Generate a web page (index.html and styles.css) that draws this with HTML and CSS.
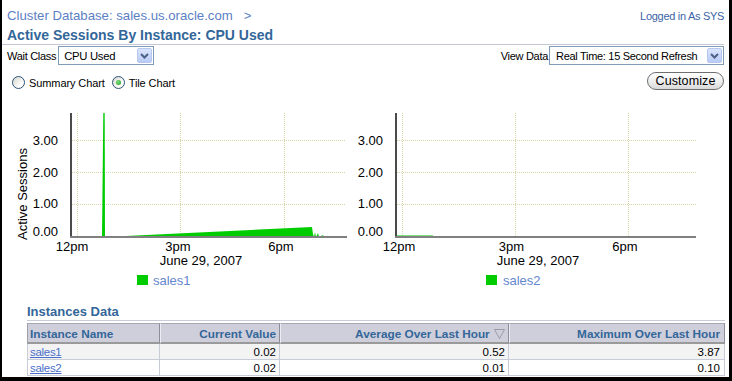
FILE: index.html
```html
<!DOCTYPE html>
<html>
<head>
<meta charset="utf-8">
<title>Active Sessions By Instance: CPU Used</title>
<link rel="stylesheet" href="styles.css">
</head>
<body>
<div class="frame">
  <div class="head">
    <div class="crumbs"><a class="crumb" href="#">Cluster Database: sales.us.oracle.com</a><span class="sep">&gt;</span></div>
    <div class="login">Logged in As SYS</div>
  </div>
  <h1 class="title">Active Sessions By Instance: CPU Used</h1>
  <div class="rule"></div>
  <div class="controls">
    <div class="field">
      <span class="lbl">Wait Class</span>
      <div class="select sel-wait"><span class="val">CPU Used</span><span class="drop"><svg width="13" height="15" viewBox="0 0 13 15"><path d="M3 6 L6.5 9.5 L10 6" fill="none" stroke="#4d6185" stroke-width="2"/></svg></span></div>
    </div>
    <div class="field">
      <span class="lbl lbl-view">View Data</span>
      <div class="select sel-view"><span class="val">Real Time: 15 Second Refresh</span><span class="drop"><svg width="13" height="15" viewBox="0 0 13 15"><path d="M3 6 L6.5 9.5 L10 6" fill="none" stroke="#4d6185" stroke-width="2"/></svg></span></div>
    </div>
  </div>
  <div class="options">
    <div class="radios">
      <span class="radio"></span><span class="rlabel">Summary Chart</span>
      <span class="radio checked"></span><span class="rlabel">Tile Chart</span>
    </div>
    <button class="customize">Customize</button>
  </div>
  <div class="charts">
    <svg class="chart" width="348" height="190" viewBox="0 0 348 190">
      <g class="grid">
        <line x1="70" y1="39.5" x2="344" y2="39.5"/>
        <line x1="70" y1="71.5" x2="344" y2="71.5"/>
        <line x1="70" y1="103.5" x2="344" y2="103.5"/>
        <line x1="75.5" y1="12" x2="75.5" y2="135"/>
        <line x1="178.5" y1="12" x2="178.5" y2="135"/>
        <line x1="282.5" y1="12" x2="282.5" y2="135"/>
      </g>
      <polygon class="data" points="100,136 101.3,12 102.7,12 103,136"/>
      <polygon class="data" points="103,136 310,126 311,133 312,136 313,131 314,136 316,132 317,136 321,134 322,136"/>
      <rect class="yaxis" x="68" y="12" width="2" height="125"/>
      <rect class="xaxis" x="68" y="135" width="277" height="2"/>
      <g class="ylab">
        <text x="56" y="44">3.00</text>
        <text x="56" y="76">2.00</text>
        <text x="56" y="107">1.00</text>
        <text x="56" y="135">0.00</text>
      </g>
      <text class="ytitle" transform="translate(25,93) rotate(-90)">Active Sessions</text>
      <g class="xlab">
        <text x="70" y="150">12pm</text>
        <text x="176" y="150">3pm</text>
        <text x="279" y="150">6pm</text>
        <text x="199" y="164">June 29, 2007</text>
      </g>
      <rect class="swatch" x="135" y="174" width="11" height="10"/>
      <text class="legend" x="151" y="184">sales1</text>
    </svg>
    <svg class="chart" width="377" height="190" viewBox="0 0 377 190">
      <g class="grid">
        <line x1="47" y1="39.5" x2="346" y2="39.5"/>
        <line x1="47" y1="71.5" x2="346" y2="71.5"/>
        <line x1="47" y1="103.5" x2="346" y2="103.5"/>
        <line x1="52.5" y1="12" x2="52.5" y2="135"/>
        <line x1="165.5" y1="12" x2="165.5" y2="135"/>
        <line x1="278.5" y1="12" x2="278.5" y2="135"/>
      </g>
      <line class="trace" x1="47" y1="134.5" x2="83" y2="134.5"/>
      <rect class="yaxis" x="45" y="12" width="2" height="125"/>
      <rect class="xaxis" x="45" y="135" width="301" height="2"/>
      <g class="ylab">
        <text x="33" y="44">3.00</text>
        <text x="33" y="76">2.00</text>
        <text x="33" y="107">1.00</text>
        <text x="33" y="135">0.00</text>
      </g>
      <g class="xlab">
        <text x="49" y="150">12pm</text>
        <text x="161.5" y="150">3pm</text>
        <text x="275" y="150">6pm</text>
        <text x="188" y="164">June 29, 2007</text>
      </g>
      <rect class="swatch" x="136" y="174" width="11" height="10"/>
      <text class="legend" x="153" y="184">sales2</text>
    </svg>
  </div>
  <section class="instances">
    <h2 class="sub">Instances Data</h2>
    <table class="data-table">
      <colgroup>
        <col class="c1"><col class="c2"><col class="c3"><col class="c4">
      </colgroup>
      <thead>
        <tr>
          <th class="left">Instance Name</th>
          <th>Current Value</th>
          <th>Average Over Last Hour <svg class="sort" width="11" height="10" viewBox="0 0 11 10"><path d="M0.5 0.5 L10.5 0.5 L5.5 9.5 Z" fill="none" stroke="#9a9aa8"/></svg></th>
          <th>Maximum Over Last Hour</th>
        </tr>
      </thead>
      <tbody>
        <tr class="odd"><td class="left"><a href="#">sales1</a></td><td>0.02</td><td>0.52</td><td>3.87</td></tr>
        <tr><td class="left"><a href="#">sales2</a></td><td>0.02</td><td>0.01</td><td>0.10</td></tr>
      </tbody>
    </table>
  </section>
</div>
</body>
</html>
```

FILE: styles.css
```css
* { box-sizing: border-box; }
html, body { margin: 0; padding: 0; }
body {
  width: 732px;
  height: 381px;
  overflow: hidden;
  background: #000;
  font-family: "Liberation Sans", Arial, sans-serif;
  color: #000;
}
.frame {
  margin-left: 2px;
  width: 727px;
  height: 377px;
  background: #fff;
  overflow: hidden;
}
.head {
  display: flex;
  justify-content: space-between;
  align-items: baseline;
  padding: 7px 5px 0 5px;
  line-height: 16px;
}
.crumb {
  font-size: 13.2px;
  color: #5b80c4;
  text-decoration: none;
}
.sep {
  font-size: 13px;
  color: #5b80c4;
  margin-left: 11px;
}
.login {
  font-size: 11px;
  color: #3a64a6;
  letter-spacing: -0.3px;
}
.title {
  margin: 3px 0 0 0;
  padding: 0 5px;
  font-size: 14px;
  line-height: 16px;
  font-weight: bold;
  color: #336699;
}
.rule {
  margin: 1px 5px 0 0;
  height: 1px;
  background: #c4c7cf;
}
.controls {
  display: flex;
  justify-content: space-between;
  align-items: center;
  margin-top: 1px;
  padding: 0 5px;
  height: 19px;
}
.field {
  display: flex;
  align-items: center;
  font-size: 11px;
  letter-spacing: -0.3px;
}
.lbl { margin-right: 2px; }
.lbl-view { margin-right: 1px; }
.select {
  height: 19px;
  border: 1px solid #7f9db9;
  display: flex;
  align-items: center;
  justify-content: space-between;
  padding: 0 1px 0 5px;
  font-size: 11.3px;
  background: #fff;
}
.sel-wait { width: 96px; }
.sel-view { width: 175px; padding-left: 6px; font-size: 11px; }
.drop {
  width: 15px;
  height: 15px;
  display: flex;
  align-items: center;
  justify-content: center;
  background: linear-gradient(#dbe5fd, #b9cbf6);
  border: 1px solid #b6c8f2;
  border-radius: 2px;
}
.options {
  display: flex;
  justify-content: space-between;
  align-items: flex-start;
  margin-top: 6px;
  padding: 0 5px 0 10px;
  height: 19px;
}
.radios {
  display: flex;
  align-items: center;
  height: 13px;
  margin-top: 5px;
  font-size: 11px;
  letter-spacing: -0.1px;
}
.radio {
  position: relative;
  width: 13px;
  height: 13px;
  border-radius: 50%;
  border: 1px solid #2a5277;
  background: linear-gradient(135deg, #d6d6ce, #fdfdfb 70%);
}
.radio.checked::after {
  content: "";
  position: absolute;
  left: 3px;
  top: 3px;
  width: 5px;
  height: 5px;
  border-radius: 50%;
  background: radial-gradient(circle at 40% 40%, #7de07d, #1e9a1e);
}
.rlabel { margin: 0 7px 0 4px; }
.customize {
  margin: 1px 0 0 0;
  width: 77px;
  height: 18px;
  padding: 0;
  border: 1px solid #6f6f6f;
  border-radius: 9px;
  background: linear-gradient(#ffffff, #ececec 60%, #d8d8d8);
  font-family: "Liberation Sans", Arial, sans-serif;
  font-size: 12.5px;
  line-height: 16px;
  color: #000;
  letter-spacing: 0.1px;
}
.charts {
  display: flex;
  margin-top: 11px;
  height: 190px;
}
.chart { display: block; }
.chart text {
  font-family: "Liberation Sans", Arial, sans-serif;
  font-size: 13px;
  fill: #000;
}
.grid line {
  stroke: #d6d6a8;
  stroke-width: 1;
  stroke-dasharray: 1 1;
}
.data { fill: #00cc00; }
.trace { stroke: #00cc00; stroke-width: 1; opacity: 0.5; }
.yaxis { fill: #4a4a4a; }
.xaxis { fill: #808080; }
.ylab text { text-anchor: end; }
.xlab text { text-anchor: middle; }
.chart .ytitle { text-anchor: middle; }
.swatch { fill: #00cc00; }
.chart .legend { fill: #6487cf; }
.instances {
  margin: 13px 4px 0 25px;
}
.sub {
  margin: 0;
  font-size: 13px;
  line-height: 16px;
  font-weight: bold;
  color: #336699;
  border-bottom: 1px solid #c8ccd8;
}
.data-table {
  margin-top: 2px;
  width: 698px;
  table-layout: fixed;
  border-collapse: separate;
  border-spacing: 0;
  font-size: 11.5px;
}
.c1 { width: 133px; }
.c2 { width: 120px; }
.c3 { width: 229px; }
.c4 { width: 216px; }
.data-table th {
  height: 21px;
  padding: 1px 3px 0 2px;
  background: #cfcfdc;
  color: #336699;
  font-size: 11.8px;
  font-weight: bold;
  text-align: right;
  border-top: 1px solid #a6a6b4;
  border-bottom: 2px solid #9a9a9a;
  border-right: 1px solid #8e8e9a;
  border-left: 1px solid #ecedf3;
  white-space: nowrap;
  vertical-align: middle;
}
.data-table th:first-child { border-left: 1px solid #a0a0a8; }
.data-table th:last-child { padding-right: 4px; }
.data-table th.left { text-align: left; }
.sort { vertical-align: -1px; margin-left: 1px; }
.data-table td {
  height: 16px;
  padding: 0 3px 0 2px;
  text-align: right;
  border-right: 1px solid #c8ccd8;
  border-bottom: 1px solid #c8ccd8;
  white-space: nowrap;
}
.data-table td:first-child { border-left: 1px solid #c8ccd8; }
.data-table td:last-child { padding-right: 4px; }
.data-table td.left { text-align: left; }
.data-table tr.odd td { background: #f3f3f3; }
.data-table a {
  color: #4a6fc9;
  text-decoration: underline;
  letter-spacing: -0.3px;
}
```
